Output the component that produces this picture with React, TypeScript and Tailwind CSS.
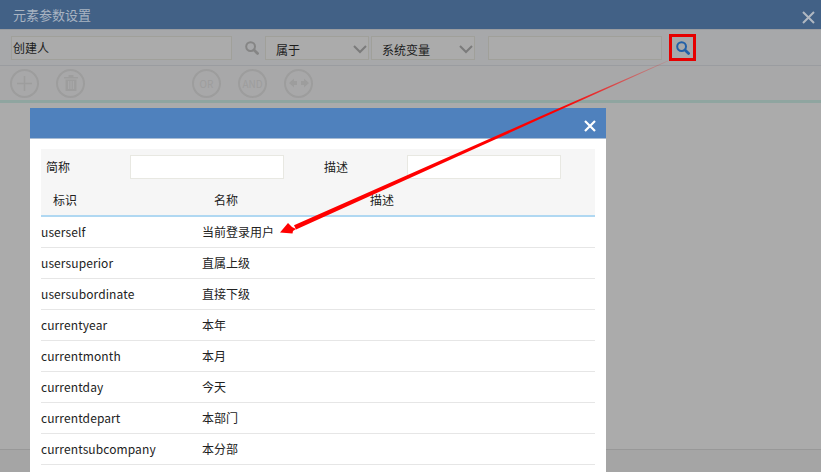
import React from "react";

const rows = [
  ["userself", "当前登录用户"],
  ["usersuperior", "直属上级"],
  ["usersubordinate", "直接下级"],
  ["currentyear", "本年"],
  ["currentmonth", "本月"],
  ["currentday", "今天"],
  ["currentdepart", "本部门"],
  ["currentsubcompany", "本分部"],
];

const font = "font-['Noto_Sans_CJK_SC','Noto_Sans',sans-serif]";

const MagnifierIcon = ({ color, size = 14 }: { color: string; size?: number }) => (
  <svg width={size} height={size} viewBox="0 0 14 14" fill="none">
    <circle cx="5.6" cy="5.6" r="4.4" stroke={color} strokeWidth="2" />
    <path d="M9 9l3.6 3.4" stroke={color} strokeWidth="2.8" strokeLinecap="round" />
  </svg>
);

const Chevron = () => (
  <svg width="14" height="9" viewBox="0 0 14 9" fill="none" className="mt-[3px]">
    <path d="M1 1l6 6 6-6" stroke="#7b7b7b" strokeWidth="2" />
  </svg>
);

const RoundButton = ({ children, className }: { children: React.ReactNode; className?: string }) => (
  <div className={`flex h-[29px] w-[29px] items-center justify-center rounded-full border-2 border-[#9d9d9d] text-[10px] text-[#9d9d9d] ${className ?? ""}`}>
    {children}
  </div>
);

const Select = ({ label, width }: { label: string; width: string }) => (
  <div className={`flex h-[24px] items-center justify-between border border-[#a0a09a] bg-[#ababab] pl-[10px] pr-[1px] text-[12px] text-[#1c1c1c] ${width}`}>
    <span className="mt-[4px]">{label}</span>
    <Chevron />
  </div>
);

const FilterInput = ({ className }: { className: string }) => (
  <div className={`h-[24px] border border-[#e8e8e2] bg-white ${className}`} />
);

export default function App() {
  return (
    <div className={`relative flex h-[472px] w-[821px] flex-col overflow-hidden bg-[#ababab] ${font}`}>
      <div className="flex h-[29px] items-center justify-between bg-[#426186] pl-[13px] pr-[6px] text-[13px] text-[#a9b4c2]">
        <span>元素参数设置</span>
        <svg width="13" height="13" viewBox="0 0 13 13" className="mt-[5px]">
          <path d="M1 1l11 11M12 1L1 12" stroke="#b0b8c2" strokeWidth="2" />
        </svg>
      </div>

      <div className="flex h-[37px] items-center border-t border-b border-[#9a9ca0] bg-[#a7a8aa] pl-[11px]">
        <div className="flex h-[24px] w-[221px] items-center border border-[#a0a09a] bg-[#ababab] pl-[1px] text-[12px] text-[#1c1c1c]">创建人</div>
        <div className="ml-[13px] mr-[6px] w-[14px]">
          <MagnifierIcon color="#858585" />
        </div>
        <Select label="属于" width="w-[104px]" />
        <div className="w-[2px]" />
        <Select label="系统变量" width="w-[104px]" />
        <div className="ml-[13px] h-[24px] w-[174px] border border-[#a0a09a] bg-[#ababab]" />
        <div className="ml-[7px] flex h-[27px] w-[27px] items-center justify-center border-[3px] border-[#e60000]">
          <MagnifierIcon color="#2260a8" />
        </div>
      </div>

      <div className="flex h-[34px] items-center gap-[17px] bg-[#a8a8a9] pl-[10px]">
        <RoundButton>
          <svg width="17" height="17" viewBox="0 0 17 17">
            <path d="M8.5 1v15M1 8.5h15" stroke="#9d9d9d" strokeWidth="1.5" />
          </svg>
        </RoundButton>
        <RoundButton>
          <svg width="14" height="16" viewBox="0 0 14 16" fill="#9d9d9d">
            <path d="M0 2h14v1.6H0zM4.5 0h5v2h-5zM1.5 4.5h11V16h-11zM4 6v8h1.3V6zM6.4 6v8h1.3V6zM8.8 6v8h1.3V6z" fillRule="evenodd" />
          </svg>
        </RoundButton>
        <RoundButton className="ml-[90px]">OR</RoundButton>
        <RoundButton>AND</RoundButton>
        <RoundButton>
          <svg width="20" height="10" viewBox="0 0 20 10" fill="#9d9d9d">
            <path d="M0 5l5-4.5V3h3v4H5v2.5zM20 5l-5-4.5V3h-3v4h3v2.5z" />
          </svg>
        </RoundButton>
      </div>

      <div className="h-[3px] bg-[#8fa5a0]" />
      <div className="flex-1" />
      <div className="h-[23px] border-t border-[#989898] bg-[#a5a5a5]" />

      <div className="absolute left-[30px] top-[108px] w-[576px] bg-white">
        <div className="flex h-[31px] items-center justify-end border-b border-[#a8bcd4] bg-[#4f81bd] pr-[10px]">
          <svg width="12" height="12" viewBox="0 0 12 12" className="mt-[5px]">
            <path d="M1 1l10 10M11 1L1 11" stroke="#ffffff" strokeWidth="2.2" />
          </svg>
        </div>
        <div className="px-[11px] pt-[10px] pb-[40px] text-[12px] text-[#222222]">
          <div className="border-b-2 border-[#b0d8f2] bg-[#f6f6f6]">
            <div className="flex h-[36px] items-center">
              <span className="ml-[5px] w-[84px]">简称</span>
              <FilterInput className="w-[154px]" />
              <span className="ml-[40px] w-[83px]">描述</span>
              <FilterInput className="w-[154px]" />
            </div>
            <div className="flex h-[30px] items-center pb-[1px]">
              <span className="ml-[12px] w-[161px]">标识</span>
              <span className="w-[156px]">名称</span>
              <span>描述</span>
            </div>
          </div>
          {rows.map(([id, name]) => (
            <div key={id} className="flex h-[31px] items-center border-b border-[#e6e6e6]">
              <span className="w-[161px] tracking-[0.1px]">{id}</span>
              <span>{name}</span>
            </div>
          ))}
        </div>
      </div>

      <svg className="pointer-events-none absolute left-0 top-0" width="821" height="472" viewBox="0 0 821 472">
        <defs>
          <linearGradient id="fade" gradientUnits="userSpaceOnUse" x1="668" y1="60" x2="560" y2="108">
            <stop offset="0" stopColor="#ff0000" stopOpacity="0.12" />
            <stop offset="1" stopColor="#ff0000" />
          </linearGradient>
        </defs>
        <polygon points="668,60.4 540,116.6 294,225.2 296,229.6 541,118.6 668,61.2" fill="url(#fade)" />
        <polygon points="280,232.5 288,223 292,227 296,229 293,231 292.5,233.5" fill="#ff0000" />
      </svg>
    </div>
  );
}
